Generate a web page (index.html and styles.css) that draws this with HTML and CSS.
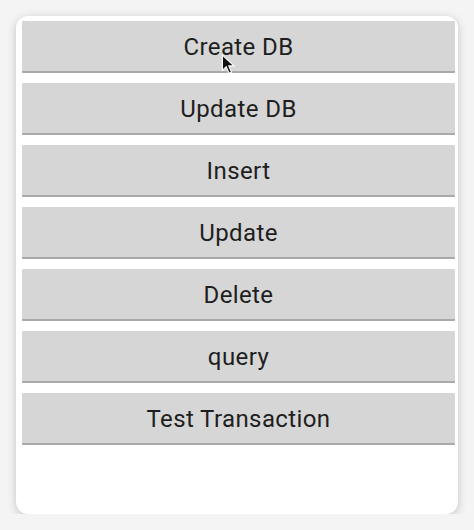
FILE: index.html
```html
<!DOCTYPE html>
<html>
<head>
	<meta charset="UTF-8">
	<meta name="viewport" content="width=device-width, initial-scale=1">
	<title>DB Demo</title>
	<link rel="stylesheet" href="styles.css">
</head>
<body>

	<div class="screen">
		<div class="btn-list">
			<button class="db-btn">Create DB</button>
			<button class="db-btn">Update DB</button>
			<button class="db-btn">Insert</button>
			<button class="db-btn">Update</button>
			<button class="db-btn">Delete</button>
			<button class="db-btn">query</button>
			<button class="db-btn">Test Transaction</button>
		</div>

		<!-- mouse pointer over the first button -->
		<svg class="cursor" width="16" height="22" viewBox="0 0 14 20">
			<path d="M1 1 L1 15 L4.5 11.5 L7 17.5 L9.2 16.6 L6.8 10.8 L11.5 10.8 Z" fill="#111" stroke="#fff" stroke-width="1"/>
		</svg>
	</div>

</body>
</html>
```

FILE: styles.css
```css
body {
	margin: 0;
	padding: 0;
	background-color: #f4f4f4;
	font-family: 'Roboto', 'Liberation Sans', sans-serif;
}

/* the phone screen card */
.screen {
	position: relative;
	width: 442px;
	height: 498px;
	margin: 16px 0 0 16px;
	background-color: #fff;
	border-radius: 12px;
	box-shadow: 0 2px 10px rgba(0,0,0,0.2);
	box-sizing: border-box;
	padding: 5px 3px 0 6px;
}
.btn-list {
	display: flex;
	flex-direction: column;
	gap: 10px;
}
.db-btn {
	height: 52px;
	margin: 0;
	padding: 2px 0 0 0;
	border: none;
	border-bottom: 2px solid #a9a9a9;
	border-radius: 1px;
	background-color: #d6d6d6;
	color: #1e1e1e;
	font-family: inherit;
	font-size: 24px;
	letter-spacing: 0.4px;
	text-align: center;
}

.cursor {
	position: absolute;
	left: 205px;
	top: 38px;
}
```
